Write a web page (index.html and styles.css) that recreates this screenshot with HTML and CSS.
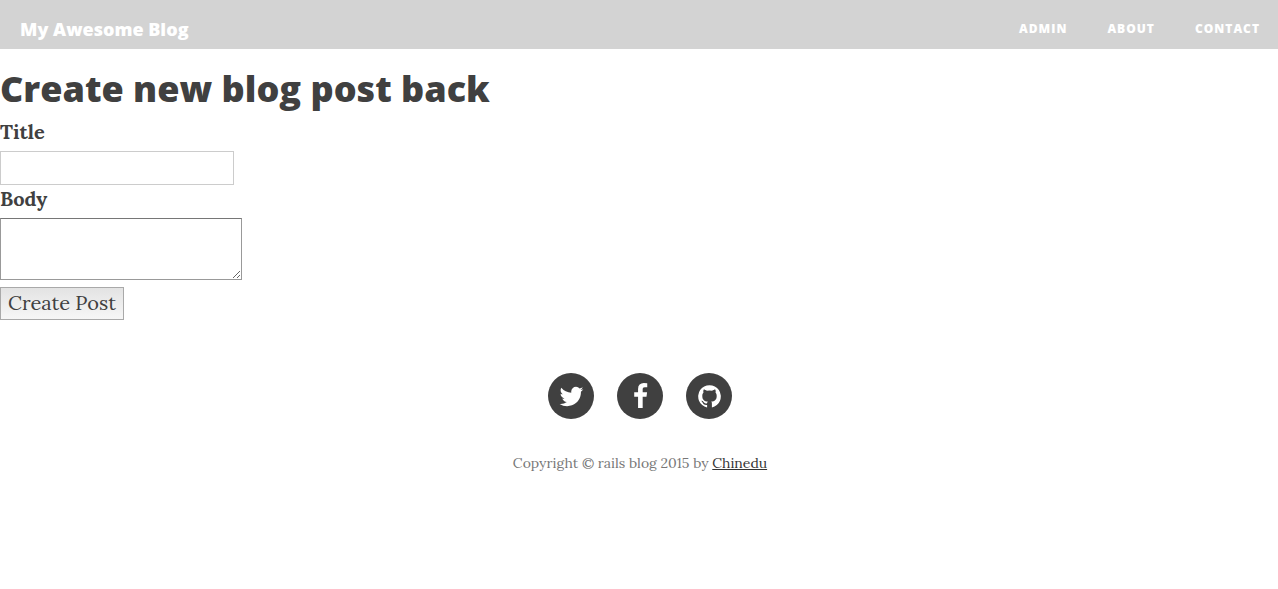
FILE: index.html
```html
<!DOCTYPE html>
<html lang="en">
<head>
<meta charset="utf-8">
<meta name="viewport" content="width=device-width, initial-scale=1">
<title>My Awesome Blog</title>
<link rel="stylesheet" href="styles.css">
</head>
<body>
<header class="navbar">
  <a class="brand" href="#">My Awesome Blog</a>
  <nav class="nav-links">
    <a href="#">Admin</a>
    <a href="#">About</a>
    <a href="#">Contact</a>
  </nav>
</header>
<main>
  <h1 class="page-title">Create new blog post back</h1>
  <form class="post-form">
    <label for="title">Title</label>
    <input class="title-input" id="title" type="text">
    <label for="body">Body</label>
    <textarea class="body-input" id="body"></textarea>
    <button class="submit" type="submit">Create Post</button>
  </form>
</main>
<footer class="footer">
  <div class="social">
    <a href="#" aria-label="Twitter"><svg viewBox="0 0 1792 1792"><path d="M1684 408q-67 98-162 167 1 14 1 42 0 130-38 259.5t-115.5 248.5-184.5 210.5-258 146-323 54.5q-271 0-496-145 35 4 78 4 225 0 401-138-105-2-188-64.5t-114-159.5q33 5 61 5 43 0 85-11-112-23-185.5-111.5t-73.5-205.5v-4q68 38 146 41-66-44-105-115t-39-154q0-88 44-163 121 149 294.5 238.5t371.5 99.5q-8-38-8-74 0-134 94.5-228.5t228.5-94.5q140 0 236 102 109-21 205-78-37 115-142 178 93-10 186-50z"/></svg></a>
    <a href="#" aria-label="Facebook"><svg viewBox="0 0 1792 1792"><path d="M1343 12v264h-157q-86 0-116 36t-30 108v189h293l-39 296h-254v759h-306v-759h-255v-296h255v-218q0-186 104-288.5t277-102.5q147 0 228 12z"/></svg></a>
    <a href="#" aria-label="GitHub"><svg viewBox="0 0 27 27"><path d="M11.100 24.500A11.300 11.300 0 1 1 15.900 24.500V20.700C15.900 19.700 15.700 19.100 15.200 18.600C18.900 18.200 20.700 16.600 20.700 12.900C20.700 11.500 20.300 10.500 19.500 9.600C19.800 8.500 19.800 7.500 19.300 6.400C18.200 6.400 17.100 7 16.100 7.700Q13.500 7.200 10.900 7.700C9.900 7 8.800 6.400 7.700 6.400C7.200 7.500 7.200 8.500 7.500 9.600C6.700 10.500 6.300 11.500 6.300 12.900C6.300 16.600 8.100 18.200 11.800 18.600C11.400 19 11.200 19.500 11.100 20.200C9.500 20.700 8.400 20.300 7.600 19C7 18 6.200 17.500 5.400 17.700C5.100 17.900 5.500 18.200 5.800 18.500C6.500 19.100 6.700 19.700 7 20.300C7.600 21.700 9.200 22.200 11.100 21.900Z"/></svg></a>
  </div>
  <p class="copyright">Copyright © rails blog 2015 by <a href="#">Chinedu</a></p>
</footer>
</body>
</html>
```
FILE: styles.css
```css
* {
  box-sizing: border-box;
}

body {
  margin: 0;
  background: #fff;
  color: #404040;
  font-family: Lora, "Liberation Serif", serif;
  font-size: 20px;
  line-height: 30px;
}

.navbar {
  display: flex;
  justify-content: space-between;
  align-items: center;
  padding: 14px 18px 5px 20px;
  background: #d3d3d3;
  font-family: "Open Sans", sans-serif;
  font-weight: 800;
}

.navbar a {
  color: #fff;
  text-decoration: none;
}

.brand {
  font-size: 18px;
}

.nav-links {
  display: flex;
  gap: 40px;
  font-size: 12px;
  letter-spacing: 1px;
  text-transform: uppercase;
}

.page-title {
  margin: 20px 0 9px;
  font-family: "Open Sans", sans-serif;
  font-size: 36px;
  font-weight: 800;
  line-height: 40px;
}

.post-form {
  display: flex;
  flex-direction: column;
  align-items: flex-start;
}

.post-form label {
  margin-bottom: 5px;
  font-weight: 700;
  line-height: 28px;
}

.title-input,
.body-input,
.submit {
  border: 1px solid #ccc;
  border-radius: 0;
  color: inherit;
  font: inherit;
}

.title-input {
  width: 234px;
  height: 34px;
  padding: 0 4px;
}

.body-input {
  width: 242px;
  height: 62px;
  margin-bottom: 7px;
  padding: 2px;
  border-color: #767676 #999 #999;
}

.submit {
  padding: 0 7px 1px;
  border-color: #a9a9a9;
  background: linear-gradient(#e3e3e3, #f6f6f6);
}

.footer {
  padding: 53px 0 65px 2px;
  text-align: center;
}

.social {
  display: flex;
  justify-content: center;
  gap: 23px;
}

.social a {
  display: grid;
  place-items: center;
  width: 46px;
  height: 46px;
  border-radius: 50%;
  background: #404040;
}

.social svg {
  width: 27px;
  height: 27px;
  fill: #fff;
}

.copyright {
  margin: 29px 0 0;
  color: #777;
  font-size: 14px;
}

.copyright a {
  color: #333;
}
```
